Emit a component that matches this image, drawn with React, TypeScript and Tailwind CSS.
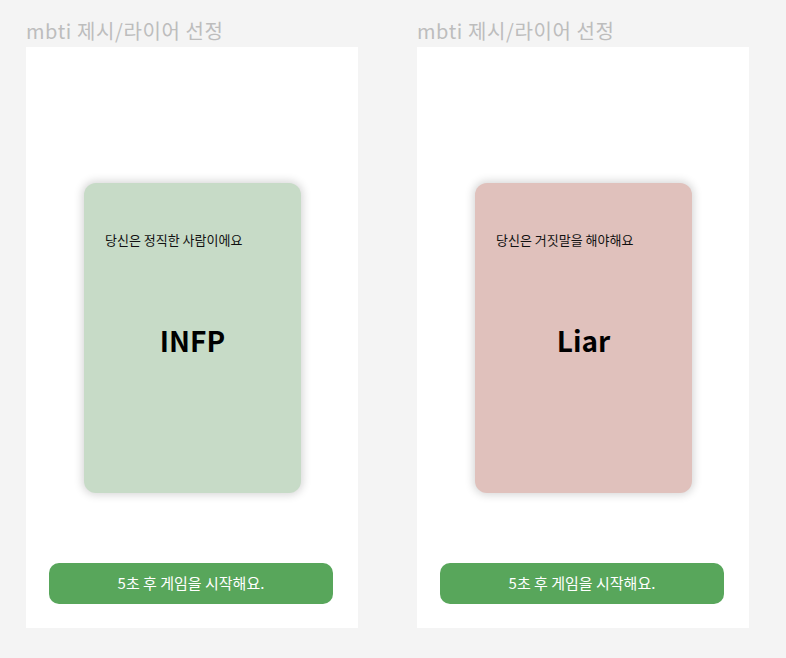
const font = { fontFamily: '"Noto Sans CJK KR", "Noto Sans", sans-serif' };

type Panel = { desc: string; title: string; bg: string };

const panels: Panel[] = [
  { desc: '당신은 정직한 사람이에요', title: 'INFP', bg: 'bg-[#c7dbc7]' },
  { desc: '당신은 거짓말을 해야해요', title: 'Liar', bg: 'bg-[#e0c1bc]' },
];

function Frame({ panel }: { panel: Panel }) {
  return (
    <div className="flex flex-col">
      <h2 className="h-[47px] pt-[18px] text-[20px] leading-[26px] tracking-[0.6px] text-[#bdbdbd]">mbti 제시/라이어 선정</h2>
      <div className="flex h-[581px] w-[332px] flex-col bg-white">
        {/* Card */}
        <div
          className={`mt-[136px] ml-[58px] flex h-[310px] w-[217px] flex-col rounded-[12px] ${panel.bg} shadow-[0_0_8px_2px_rgba(0,0,0,0.16)]`}
        >
          <p className="mt-[47px] ml-[21px] text-[13px] leading-[20px] text-[#111]">{panel.desc}</p>
          <p className="mt-[72px] text-center text-[28px] leading-[36px] font-bold text-black">{panel.title}</p>
        </div>

        {/* Start button */}
        <button className="mt-[70px] ml-[23px] h-[41px] w-[284px] rounded-[10px] bg-[#58a65b] text-[15px] font-normal text-white">
          5초 후 게임을 시작해요.
        </button>
      </div>
    </div>
  );
}

export default function App() {
  return (
    <div className="h-[658px] w-[786px] bg-[#f4f4f4] pl-[26px]" style={font}>
      <div className="flex gap-[59px]">
        {panels.map(p => (
          <Frame key={p.title} panel={p} />
        ))}
      </div>
    </div>
  );
}
